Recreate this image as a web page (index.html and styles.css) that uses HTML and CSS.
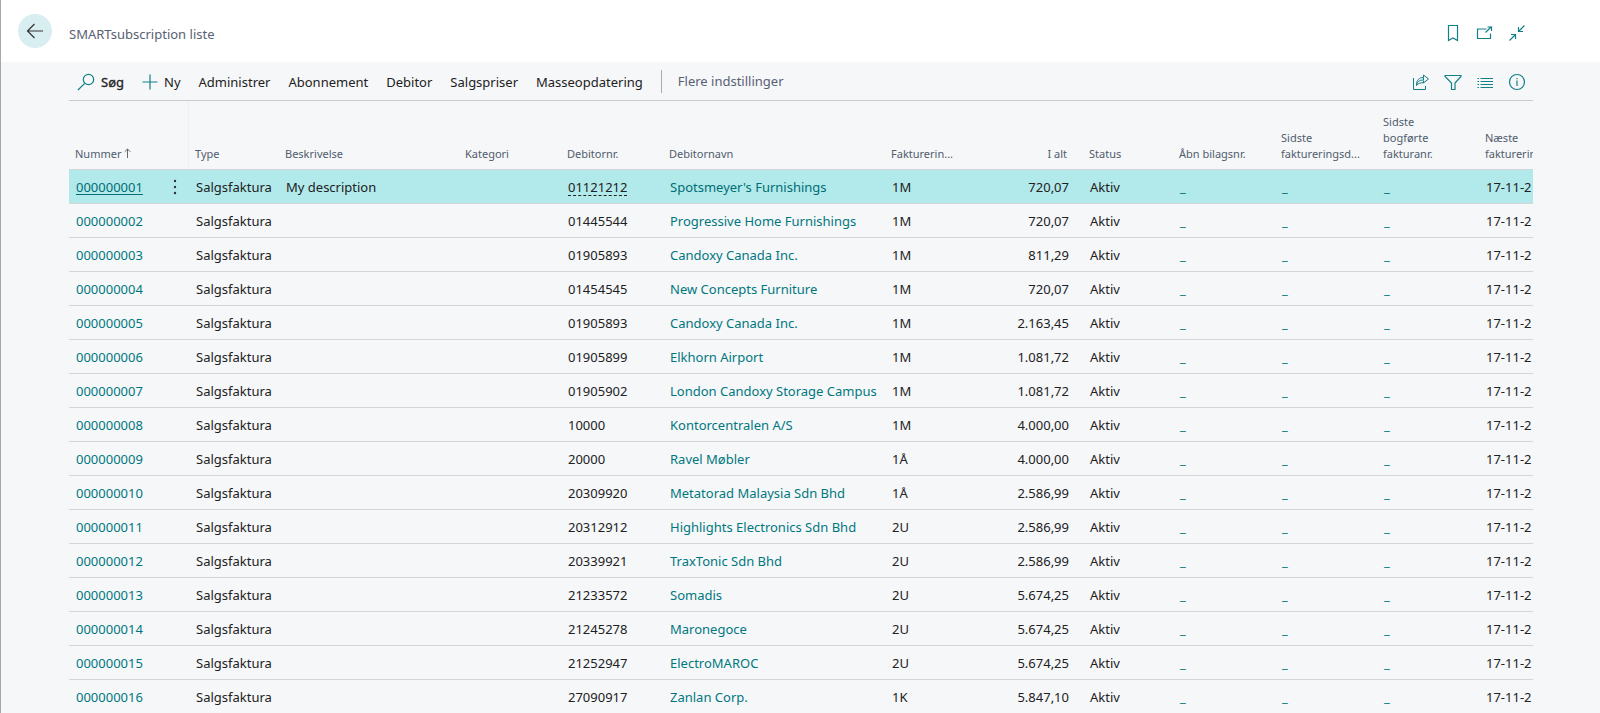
FILE: index.html
```
<!DOCTYPE html>
<html lang="da">
<head>
<meta charset="utf-8">
<title>SMARTsubscription liste</title>
<link rel="stylesheet" href="styles.css">
</head>
<body>
<header class="titlebar">
  <button class="back" aria-label="Tilbage"><svg width="18" height="18" viewBox="0 0 18 18"><path d="M17 9H1.500M8.500 2L1.500 9l7 7"/></svg></button>
  <h1 class="title">SMARTsubscription liste</h1>
  <div class="icons">
    <button aria-label="Bogmærke"><svg width="18" height="18" viewBox="0 0 18 18"><path d="M4.500 1.500h9v15l-4.500-2.500-4.500 2.500z"/></svg></button>
    <button aria-label="Åbn i nyt vindue"><svg width="18" height="18" viewBox="0 0 18 18"><path d="M10.500 5H1.500v9.500h13V9.500M9.500 8.500l6-6M11.500 3h4v4"/></svg></button>
    <button aria-label="Skjul"><svg width="18" height="18" viewBox="0 0 18 18"><path d="M16.500 1.500l-6 6M10.500 3v4.500H15M1.500 16.500l6-6M3 10.500h4.500V15"/></svg></button>
  </div>
</header>
<main class="page">
  <nav class="actions">
    <button class="action search"><svg width="18" height="18" viewBox="0 0 18 18"><circle cx="11.500" cy="6.500" r="5.200"/><path d="M7.700 10.300L1 17"/></svg>Søg</button>
    <button class="action new"><svg width="16" height="16" viewBox="0 0 16 16"><path d="M8 .5v15M.5 8h15"/></svg>Ny</button>
    <button class="action">Administrer</button>
    <button class="action">Abonnement</button>
    <button class="action">Debitor</button>
    <button class="action">Salgspriser</button>
    <button class="action">Masseopdatering</button>
    <button class="action more">Flere indstillinger</button>
    <div class="icons">
      <button aria-label="Del"><svg width="18" height="18" viewBox="0 0 18 18"><path d="M1.500 5v11.500h12V13M4.500 12.500C5 8.500 7.500 7 11.500 7V4.500V2L16.500 6 11.500 10V7.500M4.500 12.500C6 10.500 8 9.700 11.500 9.700M4.500 12.500C4.500 7 7 4.500 11.500 4.500" stroke-width="1"/></svg></button>
      <button aria-label="Filter"><svg width="18" height="18" viewBox="0 0 18 18"><path d="M1 2.500h16v1L11 10v6.500H7.500V10L1 3.500z"/></svg></button>
      <button aria-label="Liste"><svg width="18" height="18" viewBox="0 0 18 18"><path d="M4.500 5.500H17M4.500 8.500H17M4.500 11.500H17M4.500 14.500H17M1.500 5.500H3M1.500 8.500H3M1.500 11.500H3M1.500 14.500H3"/></svg></button>
      <button aria-label="Oplysninger"><svg width="18" height="18" viewBox="0 0 18 18"><circle cx="9" cy="9" r="7.500"/><path d="M9 7.500V13M9 5v1.300"/></svg></button>
    </div>
  </nav>
  <div class="list">
    <table>
      <colgroup><col class="c-num"><col class="c-dots"><col class="c-90"><col class="c-desc"><col class="c-102"><col class="c-102"><col class="c-name"><col class="c-period"><col class="c-total"><col class="c-90"><col class="c-102"><col class="c-102"><col class="c-102"><col class="c-102"></colgroup>
      <thead><tr>
        <th>Nummer <svg class="sort" width="7" height="10" viewBox="0 0 7 10"><path d="M3.500 10V1M.7 3.800L3.500 1l2.800 2.800"/></svg></th><th class="split"></th><th>Type</th><th>Beskrivelse</th><th>Kategori</th><th>Debitornr.</th><th>Debitornavn</th><th>Fakturerin...</th><th class="amount">I alt</th><th>Status</th><th>Åbn bilagsnr.</th><th>Sidste<br>faktureringsd...</th><th>Sidste<br>bogførte<br>fakturanr.</th><th>Næste<br>fakturerin</th>
      </tr></thead>
      <tbody id="rows"></tbody>
    </table>
  </div>
</main>
<script src="rows.js"></script>
</body>
</html>
```
FILE: styles.css
```
* { box-sizing: border-box; }
body {
  margin: 0;
  min-height: 100vh;
  overflow: hidden;
  border-left: 1px solid #a8a8a8;
  background: #f6f7f9;
  color: #212121;
  font: 13px/20px "Noto Sans", "Open Sans", sans-serif;
}
button { padding: 0; border: 0; background: none; color: inherit; font: inherit; }
a { color: #00777e; text-decoration: none; }
svg { display: block; fill: none; stroke: #128087; stroke-width: 1.2; }
.titlebar {
  display: flex;
  align-items: center;
  height: 62px;
  padding: 0 74px 0 17px;
  background: #fff;
}
.back {
  display: grid;
  place-items: center;
  width: 34px;
  height: 34px;
  border-radius: 50%;
  background: #d9eef1;
}
.back svg { stroke: #333; }
.title { margin: 5px 0 0 17px; color: #586173; font-size: 13px; font-weight: 400; }
.icons { display: flex; gap: 14px; margin-left: auto; }
.titlebar .icons { margin-top: 4px; }
.page { padding: 0 67px 0 68px; }
.actions {
  display: flex;
  align-items: center;
  gap: 18px;
  height: 39px;
  padding: 1px 7px 0 8px;
  border-bottom: 1px solid #c8cacd;
}
.action { display: flex; align-items: center; gap: 6px; white-space: nowrap; }
.search { -webkit-text-stroke: 0.3px; }
.more { padding-left: 16px; border-left: 1px solid #aaa; line-height: 23px; color: #586173; }
.list { overflow: hidden; }
table { width: 1512px; table-layout: fixed; border-collapse: separate; border-spacing: 0; }
.c-num { width: 92px; }
.c-dots { width: 28px; }
.c-90 { width: 90px; }
.c-desc { width: 180px; }
.c-102 { width: 102px; }
.c-name { width: 222px; }
.c-period { width: 72px; }
.c-total { width: 126px; }
th {
  height: 69px;
  padding: 0 0 7px 6px;
  border-bottom: 1px solid #d3d5d8;
  color: #505c6d;
  font-size: 11px;
  line-height: 16px;
  font-weight: 400;
  text-align: left;
  vertical-align: bottom;
  white-space: nowrap;
}
th.split { border-right: 1px solid #eff0f2; }
td { height: 34px; padding: 0 0 0 7px; border-bottom: 1px solid #d3d5d8; white-space: nowrap; }
.amount { padding-right: 14px; text-align: right; }
th.amount { padding-right: 16px; }
.sort { display: inline-block; stroke: #666; stroke-width: 1; }
.selected td { background: #b2e9eb; }
.selected a { color: #006e75; }
.selected .number { text-decoration: underline; text-underline-offset: 2px; }
.selected .lookup { text-decoration: underline dashed 1px; text-underline-offset: 3px; }
td.menu { padding: 0 0 0 12px; }
.menu button { display: block; }
.menu svg { fill: #333; stroke: none; }
```
FILE: rows.js
```
const records = [
  ["01121212", "Spotsmeyer's Furnishings", "1M", "720,07"],
  ["01445544", "Progressive Home Furnishings", "1M", "720,07"],
  ["01905893", "Candoxy Canada Inc.", "1M", "811,29"],
  ["01454545", "New Concepts Furniture", "1M", "720,07"],
  ["01905893", "Candoxy Canada Inc.", "1M", "2.163,45"],
  ["01905899", "Elkhorn Airport", "1M", "1.081,72"],
  ["01905902", "London Candoxy Storage Campus", "1M", "1.081,72"],
  ["10000", "Kontorcentralen A/S", "1M", "4.000,00"],
  ["20000", "Ravel Møbler", "1Å", "4.000,00"],
  ["20309920", "Metatorad Malaysia Sdn Bhd", "1Å", "2.586,99"],
  ["20312912", "Highlights Electronics Sdn Bhd", "2U", "2.586,99"],
  ["20339921", "TraxTonic Sdn Bhd", "2U", "2.586,99"],
  ["21233572", "Somadis", "2U", "5.674,25"],
  ["21245278", "Maronegoce", "2U", "5.674,25"],
  ["21252947", "ElectroMAROC", "2U", "5.674,25"],
  ["27090917", "Zanlan Corp.", "1K", "5.847,10"]
];
const menu = '<button aria-label="Flere muligheder"><svg width="4" height="16" viewBox="0 0 4 16"><circle cx="2" cy="2" r="1.200"/><circle cx="2" cy="8" r="1.200"/><circle cx="2" cy="14" r="1.200"/></svg></button>';
const empty = '<td><a href="#">_</a></td>';
document.getElementById("rows").innerHTML = records.map(([customer, name, period, total], i) => `
  <tr class="${i === 0 ? "selected" : ""}">
    <td><a class="number" href="#">${String(i + 1).padStart(9, "0")}</a></td>
    <td class="menu">${i === 0 ? menu : ""}</td>
    <td>Salgsfaktura</td>
    <td>${i === 0 ? "My description" : ""}</td>
    <td></td>
    <td><span class="lookup">${customer}</span></td>
    <td><a href="#">${name}</a></td>
    <td>${period}</td>
    <td class="amount">${total}</td>
    <td>Aktiv</td>
    ${empty.repeat(3)}
    <td>17-11-2</td>
  </tr>`).join("");
```
